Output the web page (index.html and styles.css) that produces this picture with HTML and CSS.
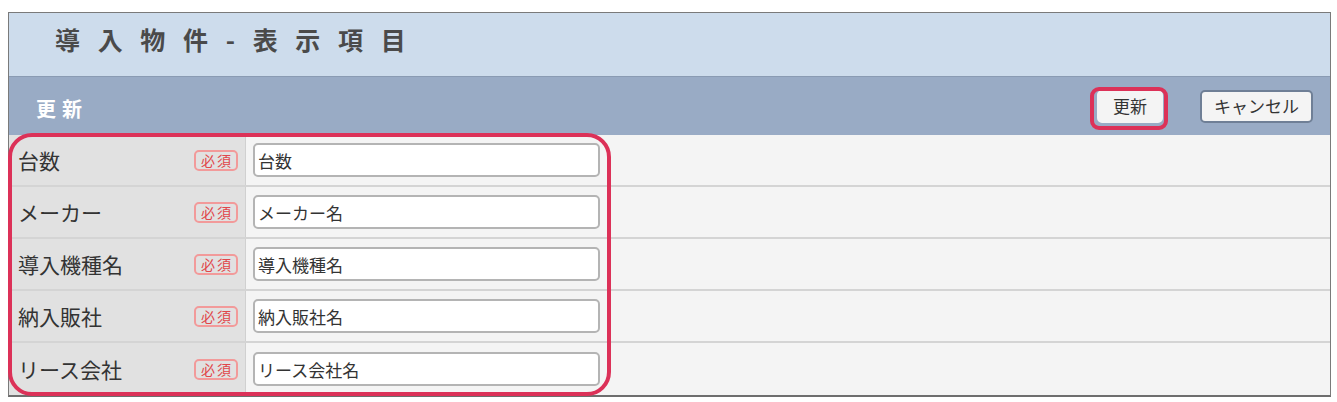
FILE: index.html
```html
<!DOCTYPE HTML>
<html>
<head>
<meta charset="utf-8">
<title>導入物件 - 表示項目</title>
<link rel="stylesheet" href="styles.css">
</head>
<body>
<div class="page">
	<div class="panel">
		<div class="title">導 入 物 件 - 表 示 項 目</div>
		<div class="subhead">
			<span class="subhead-text">更新</span>
			<div class="btns">
				<button class="tbtn upd">更新</button>
				<button class="tbtn cancel">キャンセル</button>
			</div>
		</div>
		<div class="rows">
			<div class="row">
				<div class="lbl"><span>台数</span><span class="req">必須</span></div>
				<div class="val"><input class="txt" type="text" value="台数"></div>
			</div>
			<div class="row">
				<div class="lbl"><span>メーカー</span><span class="req">必須</span></div>
				<div class="val"><input class="txt" type="text" value="メーカー名"></div>
			</div>
			<div class="row">
				<div class="lbl"><span>導入機種名</span><span class="req">必須</span></div>
				<div class="val"><input class="txt" type="text" value="導入機種名"></div>
			</div>
			<div class="row">
				<div class="lbl"><span>納入販社</span><span class="req">必須</span></div>
				<div class="val"><input class="txt" type="text" value="納入販社名"></div>
			</div>
			<div class="row last">
				<div class="lbl"><span>リース会社</span><span class="req">必須</span></div>
				<div class="val"><input class="txt" type="text" value="リース会社名"></div>
			</div>
		</div>
	</div>
	<!-- annotation rings -->
	<div class="ring ring-rows"></div>
	<div class="ring ring-btn"></div>
</div>
</body>
</html>
```

FILE: styles.css
```css
body{
	margin: 0;
	background: #ffffff;
	font-family: "Noto Sans CJK JP", "Noto Sans", sans-serif;
	color: #333333;
}
.page{
	position: relative;
	margin: 12px 0 0 8px;
	width: 1323px;
}
.panel{
	border: 1px solid #7a7a7a;
	border-bottom: 2px solid #6e6e6e;
	background: #f4f4f4;
}
.title{
	height: 63px;
	background: #cddcec;
	padding-left: 46px;
	font-size: 25px;
	font-weight: bold;
	color: #4a4a4a;
	line-height: 52px;
	letter-spacing: 6px;
	border-bottom: 1px solid #8a9bb3;
}
.subhead{
	height: 58px;
	background: #99abc5;
	display: flex;
	align-items: center;
	justify-content: space-between;
	padding: 0 17px 0 27px;
}
.subhead-text{
	color: #ffffff;
	font-size: 20px;
	font-weight: bold;
	letter-spacing: 6px;
	margin-top: 4px;
}
.btns{
	display: flex;
	gap: 37px;
	align-items: center;
}
.tbtn{
	font-family: "Noto Sans CJK JP", sans-serif;
	font-size: 17px;
	color: #333333;
	background: #f4f4f4;
	border: 2px solid #6f7f96;
	border-radius: 5px;
	height: 33px;
	padding: 0 12px;
	line-height: 28px;
}
.tbtn.upd{
	width: 66px;
	padding: 0;
	border-color: #f4f4f4;
}
.tbtn.cancel{
	width: 113px;
	padding: 0;
}
.rows{
	display: flex;
	flex-direction: column;
}
.row{
	display: flex;
	height: 52px;
	border-bottom: 2px solid #d4d4d4;
	box-sizing: border-box;
}
.row.last{
	border-bottom: 0;
}
.lbl{
	width: 237px;
	background: #e1e1e1;
	display: flex;
	align-items: center;
	justify-content: space-between;
	padding: 0 7px 0 9px;
	box-sizing: border-box;
	font-size: 21px;
	color: #333333;
	border-right: 1px solid #d0d0d0;
}
.req{
	font-size: 14px;
	color: #e0464a;
	border: 2px solid #f29a9a;
	border-radius: 5px;
	padding: 0 3px 0 5px;
	line-height: 17px;
	letter-spacing: 2px;
}
.val{
	display: flex;
	align-items: center;
	padding-left: 7px;
}
.txt{
	width: 347px;
	height: 34px;
	box-sizing: border-box;
	border: 2px solid #b4b4b4;
	border-radius: 5px;
	background: #ffffff;
	font-family: "Noto Sans CJK JP", sans-serif;
	font-size: 17px;
	color: #333333;
	padding: 0 3px;
	outline: none;
}
.ring{
	position: absolute;
	border: 4px solid #dc3158;
	box-sizing: border-box;
	pointer-events: none;
}
.ring-rows{
	left: 0;
	top: 121px;
	width: 603px;
	height: 263px;
	border-radius: 24px;
}
.ring-btn{
	left: 1082px;
	top: 75px;
	width: 78px;
	height: 43px;
	border-radius: 9px;
}
```
